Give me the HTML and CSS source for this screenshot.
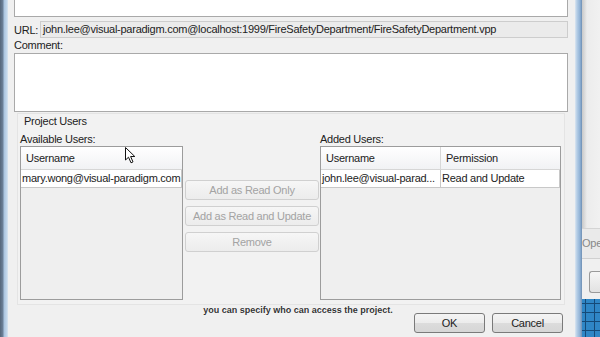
FILE: index.html
```html
<!DOCTYPE html>
<html lang="en">

<head>
    <meta charset="UTF-8">
    <title>Project Users</title>
    <link rel="stylesheet" href="styles.css">
</head>

<body>
    <div class="screen">
        <div class="frame-left"></div>

        <div class="dialog">
            <div class="top-area"></div>

            <div class="url-row">
                <span class="url-label">URL:</span>
                <div class="url-field">john.lee@visual-paradigm.com@localhost:1999/FireSafetyDepartment/FireSafetyDepartment.vpp</div>
            </div>

            <div class="comment-label">Comment:</div>
            <div class="comment-area"></div>

            <div class="group">
                <div class="group-title">Project Users</div>
                <div class="users">
                    <div class="col col-available">
                        <div class="col-label">Available Users:</div>
                        <div class="table">
                            <div class="thead">
                                <div class="th">Username</div>
                            </div>
                            <div class="tr">
                                <div class="td">mary.wong@visual-paradigm.com</div>
                            </div>
                        </div>
                    </div>

                    <div class="actions">
                        <button class="btn-disabled">Add as Read Only</button>
                        <button class="btn-disabled">Add as Read and Update</button>
                        <button class="btn-disabled">Remove</button>
                    </div>

                    <div class="col col-added">
                        <div class="col-label">Added Users:</div>
                        <div class="table">
                            <div class="thead">
                                <div class="th th-user">Username</div>
                                <div class="th">Permission</div>
                            </div>
                            <div class="tr">
                                <div class="td td-user">john.lee@visual-parad...</div>
                                <div class="td">Read and Update</div>
                            </div>
                        </div>
                    </div>
                </div>
            </div>

            <div class="footer">
                <button class="btn">OK</button>
                <button class="btn">Cancel</button>
            </div>

            <!-- video caption over the dialog -->
            <div class="caption">you can specify who can access the project.</div>

            <svg class="cursor" width="12" height="17" viewBox="0 0 12 17">
                <path d="M0.5 0.5 L0.5 13 L3.5 10.2 L6 15.8 L8 14.9 L5.6 9.5 L9.8 9.5 Z" fill="#fff" stroke="#111" stroke-width="1" stroke-linejoin="round"/>
            </svg>
        </div>

        <div class="frame-right"></div>

        <div class="behind">
            <div class="behind-top"></div>
            <div class="behind-row">Ope</div>
            <div class="behind-btn-row">
                <div class="behind-btn"></div>
            </div>
            <div class="behind-grid"></div>
        </div>
    </div>
</body>

</html>
```

FILE: styles.css
```css
body {
    margin: 0;
    background: #f0f0f0;
    font-family: "Liberation Sans", Arial, sans-serif;
    font-size: 11px;
    letter-spacing: -0.25px;
    color: #222;
}

.screen {
    display: flex;
    width: 600px;
    height: 337px;
    overflow: hidden;
}

.frame-left {
    width: 8px;
    flex-shrink: 0;
    background: linear-gradient(to right, #55667a 0, #6d829a 3px, #a9c3de 4px, #c6d9ec 7px, #dde7f0 8px);
}

.dialog {
    position: relative;
    width: 567px;
    flex-shrink: 0;
    background: #f0f0f0;
    padding: 0 7px 0 6px;
    box-sizing: border-box;
}

.top-area {
    height: 17px;
    background: #fff;
    border: 1px solid #a9a9a9;
    border-top: none;
    box-sizing: border-box;
}

.url-row {
    display: flex;
    align-items: center;
    margin-top: 4px;
    height: 17px;
}

.url-label {
    width: 26px;
}

.url-field {
    flex: 1;
    height: 17px;
    line-height: 15px;
    padding-left: 2px;
    background: #ebebeb;
    border: 1px solid #cdcdcd;
    box-sizing: border-box;
    white-space: nowrap;
    overflow: hidden;
}

.comment-label {
    height: 15px;
    line-height: 15px;
}

.comment-area {
    height: 59px;
    background: #fff;
    border: 1px solid #a9a9a9;
    box-sizing: border-box;
}

.group {
    margin: 1px 3px 0 3px;
    padding: 0 3px 4px 2px;
    border: 1px solid #e4e4e4;
    background: #f2f2f2;
}

.group-title {
    height: 14px;
    line-height: 14px;
    padding-left: 4px;
}

.users {
    display: flex;
    margin-top: 4px;
}

.col-label {
    height: 14px;
    line-height: 14px;
}

.col-available {
    width: 163px;
}

.col-added {
    width: 241px;
    margin-left: 1px;
}

.table {
    height: 154px;
    border: 1px solid #9c9c9c;
    background: #efefef;
    box-sizing: border-box;
}

.thead {
    display: flex;
    height: 22px;
    background: linear-gradient(#ffffff, #f1f2f4);
    border-bottom: 1px solid #d6d6d6;
}

.th {
    flex: 1;
    line-height: 22px;
    padding-left: 5px;
}

.th-user {
    flex: none;
    width: 120px;
    border-right: 1px solid #d8d8d8;
    box-sizing: border-box;
}

.tr {
    display: flex;
    height: 17px;
    background: #fff;
    border-bottom: 1px solid #c8c8c8;
    border-right: 1px solid #c8c8c8;
}

.td {
    flex: 1;
    line-height: 17px;
    padding-left: 1px;
    white-space: nowrap;
    overflow: hidden;
}

.td-user {
    flex: none;
    width: 120px;
    border-right: 1px solid #c8c8c8;
    box-sizing: border-box;
}

.actions {
    display: flex;
    flex-direction: column;
    gap: 6px;
    width: 134px;
    margin-left: 2px;
    padding-top: 48px;
}

button {
    font-family: inherit;
    font-size: 11px;
    letter-spacing: -0.25px;
    height: 20px;
    padding: 0;
    border-radius: 3px;
    box-sizing: border-box;
}

.btn-disabled {
    color: #a3a3a3;
    background: linear-gradient(#f6f6f6, #ececec);
    border: 1px solid #d0d0d0;
}

.footer {
    display: flex;
    justify-content: flex-end;
    gap: 7px;
    margin-top: 8px;
    padding-right: 5px;
}

.btn {
    width: 71px;
    color: #222;
    background: linear-gradient(#f4f4f4 0, #ececec 50%, #dcdcdc 51%, #d6d6d6 100%);
    border: 1px solid #7a7a7a;
}

.caption {
    position: absolute;
    left: 185px;
    top: 305px;
    width: 210px;
    text-align: center;
    font-size: 9px;
    font-weight: bold;
    letter-spacing: 0;
    color: #333;
    text-shadow: 0 0 1px #fff, 0 0 1px #fff;
}

.cursor {
    position: absolute;
    left: 117px;
    top: 147px;
}

.frame-right {
    width: 7px;
    flex-shrink: 0;
    background: linear-gradient(to right, #dbe6f1 0, #b4cde6 2px, #8fb1d5 5px, #6f8fb3 7px);
}

.behind {
    flex: 1;
    display: flex;
    flex-direction: column;
}

.behind-top {
    height: 228px;
    background: linear-gradient(to right, #c9c9c9 0, #ececec 5px, #f2f2f2 100%);
    border-bottom: 1px solid #d4d4d4;
}

.behind-row {
    height: 29px;
    line-height: 29px;
    color: #888;
    background: #eaeaea;
    border-bottom: 1px solid #d0d0d0;
    white-space: nowrap;
    overflow: hidden;
}

.behind-btn-row {
    height: 40px;
    background: #f0f0f0;
    padding: 12px 0 0 7px;
    box-sizing: border-box;
}

.behind-btn {
    height: 20px;
    border: 1px solid #9a9a9a;
    border-right: none;
    border-radius: 3px 0 0 3px;
    background: linear-gradient(#f6f6f6, #e2e2e2);
}

.behind-grid {
    flex: 1;
    background-color: #2f86c6;
    background-image:
        linear-gradient(to right, #154a78 1px, transparent 1px),
        linear-gradient(#154a78 1px, transparent 1px);
    background-size: 9px 9px;
    background-position: 3px 4px;
}
```
